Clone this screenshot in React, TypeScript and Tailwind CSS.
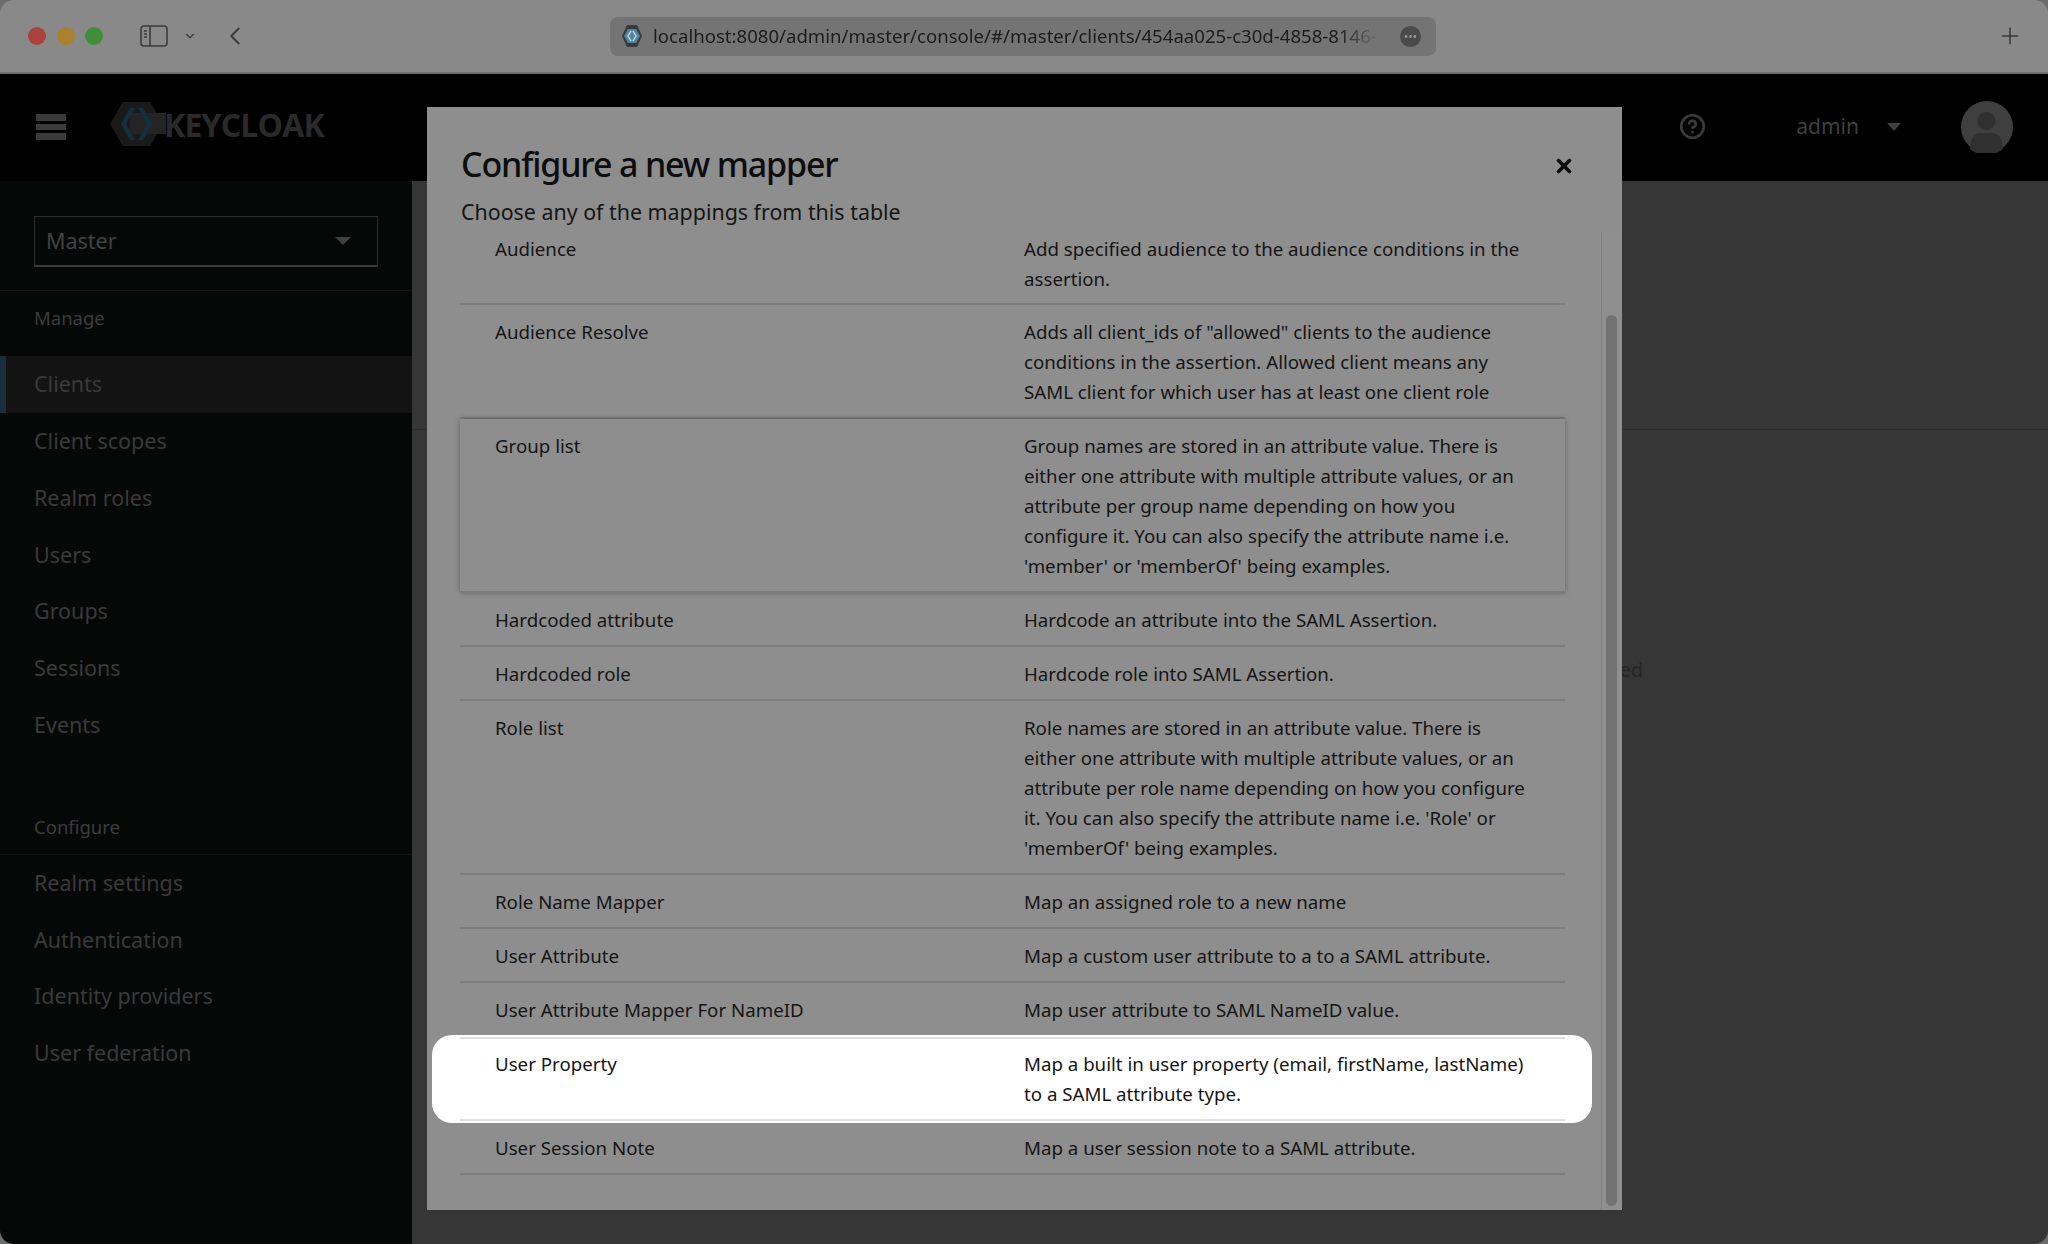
import { ChevronDown, ChevronLeft, CircleHelp, Ellipsis, Plus, X } from "lucide-react";

const font = "font-['Noto_Sans',sans-serif]";

const mappers = [
  { name: "Audience", lines: ["Add specified audience to the audience conditions in the", "assertion."], first: true },
  {
    name: "Audience Resolve",
    lines: [
      'Adds all client_ids of "allowed" clients to the audience',
      "conditions in the assertion. Allowed client means any",
      "SAML client for which user has at least one client role",
    ],
  },
  {
    name: "Group list",
    hovered: true,
    lines: [
      "Group names are stored in an attribute value. There is",
      "either one attribute with multiple attribute values, or an",
      "attribute per group name depending on how you",
      "configure it. You can also specify the attribute name i.e.",
      "'member' or 'memberOf' being examples.",
    ],
  },
  { name: "Hardcoded attribute", lines: ["Hardcode an attribute into the SAML Assertion."] },
  { name: "Hardcoded role", lines: ["Hardcode role into SAML Assertion."] },
  {
    name: "Role list",
    lines: [
      "Role names are stored in an attribute value. There is",
      "either one attribute with multiple attribute values, or an",
      "attribute per role name depending on how you configure",
      "it. You can also specify the attribute name i.e. 'Role' or",
      "'memberOf' being examples.",
    ],
  },
  { name: "Role Name Mapper", lines: ["Map an assigned role to a new name"] },
  { name: "User Attribute", lines: ["Map a custom user attribute to a to a SAML attribute."] },
  { name: "User Attribute Mapper For NameID", lines: ["Map user attribute to SAML NameID value."] },
  {
    name: "User Property",
    highlighted: true,
    lines: ["Map a built in user property (email, firstName, lastName)", "to a SAML attribute type."],
  },
  { name: "User Session Note", lines: ["Map a user session note to a SAML attribute."] },
];

const manageItems = ["Clients", "Client scopes", "Realm roles", "Users", "Groups", "Sessions", "Events"];
const configureItems = ["Realm settings", "Authentication", "Identity providers", "User federation"];

function Logo() {
  return (
    <div className="flex items-center">
      <svg width="56" height="48" viewBox="0 0 56 48" className="shrink-0">
        <polygon points="0,23 13,1 40,1 53,23 40,45 13,45" fill="#1a1a1a" />
        <rect x="20" y="12" width="36" height="21" fill="#242424" />
        <path d="M20 7 L11 23 L20 39 H25 L16 23 L25 7 Z" fill="#12303f" />
        <path d="M33 7 L42 23 L33 39 H28 L37 23 L28 7 Z" fill="#12303f" />
      </svg>
      <span className="ml-[-2px] font-['Open_Sans',sans-serif] text-[32px] leading-none font-bold tracking-[-0.8px] text-[#2a2a2a]">
        KEYCLOAK
      </span>
    </div>
  );
}

function BrowserBar() {
  return (
    <div className="flex h-[74px] shrink-0 items-center border-b-2 border-[#6f6f6f] bg-[#898989] pr-[26px] pl-[28px] text-[#3b3b3b]">
      <div className="flex gap-[10.5px]">
        <span className="h-[18px] w-[18px] rounded-full bg-[#a8423b]" />
        <span className="h-[18px] w-[18px] rounded-full bg-[#a9812f]" />
        <span className="h-[18px] w-[18px] rounded-full bg-[#3f8f3a]" />
      </div>
      <svg width="28" height="22" viewBox="0 0 28 22" fill="none" stroke="currentColor" strokeWidth="1.6" className="ml-[37px]">
        <rect x="1" y="1" width="26" height="20" rx="3" />
        <path d="M10 1V21M4 6H7M4 9H7M4 12H7" />
      </svg>
      <ChevronDown size={14} strokeWidth={2} className="ml-[15px]" />
      <ChevronLeft size={30} strokeWidth={1.6} className="ml-[23px]" />
      <div className="ml-[360px] flex h-[39px] w-[826px] items-center rounded-[8px] bg-[#747474] pl-[12px]">
        <svg width="20" height="24" viewBox="0 0 20 24" className="shrink-0">
          <polygon points="0,12 5,1 15,1 20,12 15,23 5,23" fill="#3a3a3a" />
          <polygon points="6,5 14,5 18,12 14,19 6,19 2,12" fill="#4f86a6" />
          <path d="M9 7 L6 12 L9 17M11 7 L14 12 L11 17" fill="none" stroke="#cfd8dc" strokeWidth="1.4" />
        </svg>
        <span className={`ml-[11px] w-[735px] text-[18.6px] whitespace-nowrap text-[#1c1c1c] ${font} [mask-image:linear-gradient(to_right,black_93%,transparent_99%)]`}>
          localhost:8080/admin/master/console/#/master/clients/454aa025-c30d-4858-8146-
        </span>
        <span className="ml-[12px] flex h-[21px] w-[21px] items-center justify-center rounded-full bg-[#4a4a4a] text-[#9a9a9a]">
          <Ellipsis size={15} strokeWidth={2.5} />
        </span>
      </div>
      <Plus size={26} strokeWidth={1.5} className="mr-[-1px] ml-auto" />
    </div>
  );
}

function TopBar() {
  return (
    <header className="flex h-[107px] shrink-0 items-center bg-black pr-[35px] pl-[36px]">
      <div className="mb-[2px] flex w-[30px] flex-col gap-[3px]">
        <span className="h-[7px] bg-[#3a3a3a]" />
        <span className="h-[6px] bg-[#3a3a3a]" />
        <span className="h-[7px] bg-[#3a3a3a]" />
      </div>
      <div className="mb-[6px] ml-[44px]">
        <Logo />
      </div>
      <div className="mb-[2px] ml-auto flex items-center">
        <CircleHelp size={27} strokeWidth={2.4} className="text-[#3a3a3a]" />
        <span className={`ml-[90px] text-[21px] text-[#3f3f3f] ${font}`}>admin</span>
        <span className="mt-[1px] ml-[28px] h-0 w-0 border-x-[7px] border-t-[8px] border-x-transparent border-t-[#404040]" />
        <svg width="52" height="52" viewBox="0 0 52 52" className="ml-[60px]">
          <circle cx="26" cy="26" r="26" fill="#3f3f3f" />
          <circle cx="25.5" cy="20" r="9" fill="#303030" />
          <path d="M9 48 C9 37 14 32 20 32 H31 C37 32 42 37 42 48 A26 26 0 0 1 9 48 Z" fill="#303030" />
        </svg>
      </div>
    </header>
  );
}

function NavItem({ label, active }: { label: string; active?: boolean }) {
  return (
    <div
      className={`flex h-[56.8px] items-center text-[21.5px] text-[#3a3a3a] ${
        active ? "border-l-[6px] border-[#1b2e3f] bg-[#131313] pl-[28px]" : "pl-[34px]"
      }`}
    >
      {label}
    </div>
  );
}

function Sidebar() {
  return (
    <aside className={`flex w-[412px] shrink-0 flex-col bg-[#060808] ${font}`}>
      <div className="border-b border-[#141414] pt-[35px] pr-[34px] pb-[23px] pl-[34px]">
        <div className="flex h-[51px] items-center justify-between border border-b-2 border-[#2d2d2d] border-b-[#3b3b3b] pr-[26px] pl-[11px] text-[21.5px] text-[#424242]">
          Master
          <span className="h-0 w-0 border-x-[8px] border-t-[8px] border-x-transparent border-t-[#404040]" />
        </div>
      </div>
      <div className="flex h-[65px] items-center pb-[11px] pl-[34px] text-[18.5px] text-[#3c3c3c]">Manage</div>
      {manageItems.map((item) => (
        <NavItem key={item} label={item} active={item === "Clients"} />
      ))}
      <div className="mt-[46px] flex h-[55px] items-center border-b border-[#121212] pl-[34px] text-[18.5px] text-[#3c3c3c]">
        Configure
      </div>
      {configureItems.map((item) => (
        <NavItem key={item} label={item} />
      ))}
    </aside>
  );
}

function MapperRow({ row }: { row: (typeof mappers)[number] }) {
  const pad = row.first ? "pt-[2px] pb-[9px]" : "pt-[12px] pb-[10px]";
  return (
    <div
      className={`relative grid grid-cols-[529px_1fr] border-b-2 border-[#7c7c7c] pl-[35px] text-[18.7px] leading-[30px] whitespace-nowrap text-[#151515] ${pad} ${
        row.highlighted ? "z-10" : ""
      } ${row.hovered ? "shadow-[0_0_5px_rgba(0,0,0,0.3)]" : ""}`}
    >
      {row.highlighted && (
        <div className="absolute top-[-2px] right-[-27px] bottom-[-4px] left-[-28px] -z-10 flex flex-col justify-between rounded-[20px] bg-white pt-[2px] pr-[27px] pb-[2px] pl-[28px]">
          <div className="h-[2px] bg-[#e0e0e0]" />
          <div className="h-[2px] bg-[#e0e0e0]" />
        </div>
      )}
      <div>{row.name}</div>
      <div>
        {row.lines.map((line) => (
          <div key={line}>{line}</div>
        ))}
      </div>
    </div>
  );
}

function MapperDialog() {
  return (
    <div className={`absolute top-[107px] left-[427px] flex h-[1103px] w-[1195px] flex-col bg-[#8e8e8e] ${font}`}>
      <div className="relative h-[125px] shrink-0 pt-[32px] pl-[34px]">
        <h1 className="text-[34px] leading-[50px] font-medium tracking-[-1.15px] text-[#0d0d0d]">Configure a new mapper</h1>
        <p className="mt-[8px] text-[21.4px] leading-[30px] text-[#151515]">Choose any of the mappings from this table</p>
        <X size={22} strokeWidth={4} className="absolute top-[48px] right-[47px] text-[#0d0d0d]" />
      </div>
      <div className="flex min-h-0 flex-1">
        <div className="min-w-0 flex-1 pr-[36px] pl-[33px]">
          {mappers.map((row) => (
            <MapperRow key={row.name} row={row} />
          ))}
        </div>
        <div className="flex w-[21px] shrink-0 flex-col border-l border-[#808080] bg-[#8f8f8f] pt-[83px] pr-[5px] pb-[4px] pl-[4px]">
          <div className="flex-1 rounded-full bg-[#727272]" />
        </div>
      </div>
    </div>
  );
}

export default function App() {
  return (
    <div className="h-[1244px] w-[2048px] overflow-hidden bg-[#6c6c6c]">
      <div className="relative flex h-full flex-col overflow-hidden rounded-[14px]">
        <BrowserBar />
        <TopBar />
        <div className="flex min-h-0 flex-1">
          <Sidebar />
          <main className={`flex flex-1 flex-col bg-[#363636] ${font}`}>
            <div className="h-[249px] shrink-0 border-b border-[#2e2e2e]" />
            <div className="mt-[222px] flex justify-center">
              <div className="w-[826px] text-right text-[20px] leading-[36px] text-[#262626]">
                Click the button below to add some predefined
              </div>
            </div>
          </main>
        </div>
        <MapperDialog />
      </div>
    </div>
  );
}
